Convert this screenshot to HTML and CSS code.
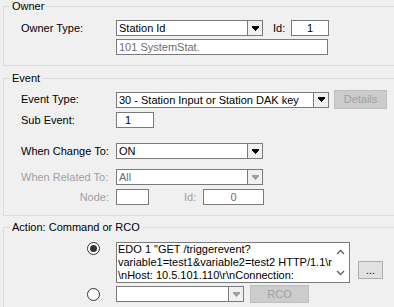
FILE: index.html
```html
<!DOCTYPE html>
<html>
<head>
<meta charset="utf-8">
<link rel="stylesheet" href="styles.css">
</head>
<body>
<div class="group owner">
  <span class="legend">Owner</span>
  <div class="row">
    <span class="lbl">Owner Type:</span>
    <div class="combo w147"><span class="val">Station Id</span><span class="cbtn"><svg width="7" height="5" viewBox="0 0 7 5"><path d="M0 0h7v1h-7zM0 1h7v1h-7zM1 2h5v1h-5zM2 3h3v1h-3zM3 4h1v1h-1z" fill="#000"/></svg></span></div>
    <span class="idlbl">Id:</span>
    <div class="box w38 center">1</div>
  </div>
  <div class="row r2">
    <span class="lbl"></span>
    <div class="box w212 dis">101 SystemStat.</div>
  </div>
</div>

<div class="group event">
  <span class="legend">Event</span>
  <div class="row h19">
    <span class="lbl">Event Type:</span>
    <div class="combo w213"><span class="val">30 - Station Input or Station DAK key</span><span class="cbtn"><svg width="7" height="5" viewBox="0 0 7 5"><path d="M0 0h7v1h-7zM0 1h7v1h-7zM1 2h5v1h-5zM2 3h3v1h-3zM3 4h1v1h-1z" fill="#000"/></svg></span></div>
    <button class="btn disabled details">Details</button>
  </div>
  <div class="row sub">
    <span class="lbl">Sub Event:</span>
    <div class="box w38 padl">1</div>
  </div>
  <div class="row change">
    <span class="lbl">When Change To:</span>
    <div class="combo w147"><span class="val">ON</span><span class="cbtn"><svg width="7" height="5" viewBox="0 0 7 5"><path d="M0 0h7v1h-7zM0 1h7v1h-7zM1 2h5v1h-5zM2 3h3v1h-3zM3 4h1v1h-1z" fill="#000"/></svg></span></div>
  </div>
  <div class="row related">
    <span class="lbl grey">When Related To:</span>
    <div class="combo w147"><span class="val dis">All</span><span class="cbtn"><svg width="7" height="5" viewBox="0 0 7 5"><path d="M0 0h7v1h-7zM0 1h7v1h-7zM1 2h5v1h-5zM2 3h3v1h-3zM3 4h1v1h-1z" fill="#a0a0a0"/></svg></span></div>
  </div>
  <div class="row node">
    <span class="lbl grey right">Node:</span>
    <div class="box w33"></div>
    <span class="idlbl grey idnode">Id:</span>
    <div class="box w61 center dis">0</div>
  </div>
</div>

<div class="group action">
  <span class="legend">Action: Command or RCO</span>
  <div class="row top arow">
    <span class="radcol"><span class="radio on"></span></span>
    <div class="memo">
      <div class="memo-text">EDO 1 "GET /triggerevent?<br>variable1=test1&amp;variable2=test2 HTTP/1.1\r<br>\nHost: 10.5.101.110\r\nConnection:</div>
      <div class="memo-scroll">
        <svg width="9" height="6" viewBox="0 0 9 6"><path d="M1 5L4.5 1.5L8 5" fill="none" stroke="#606060" stroke-width="1.4"/></svg>
        <svg width="9" height="6" viewBox="0 0 9 6"><path d="M1 1L4.5 4.5L8 1" fill="none" stroke="#606060" stroke-width="1.4"/></svg>
      </div>
    </div>
    <button class="btn dots">...</button>
  </div>
  <div class="row brow">
    <span class="radcol"><span class="radio"></span></span>
    <div class="combo w128"><span class="val"></span><span class="cbtn"><svg width="7" height="5" viewBox="0 0 7 5"><path d="M0 0h7v1h-7zM0 1h7v1h-7zM1 2h5v1h-5zM2 3h3v1h-3zM3 4h1v1h-1z" fill="#a0a0a0"/></svg></span></div>
    <button class="btn disabled rco">RCO</button>
  </div>
</div>
</body>
</html>
```

FILE: styles.css
```css
html, body {
  margin: 0;
  padding: 0;
  background: #f0f0f0;
  overflow: hidden;
  width: 394px;
  height: 307px;
}
body {
  font-family: "Liberation Sans", Arial, sans-serif;
  font-size: 11px;
  line-height: 13px;
  color: #000;
}
.group {
  position: relative;
  margin-left: 3px;
  width: 391px;
  border: 1px solid #dcdcdc;
  border-right: none;
  padding-left: 17px;
  box-sizing: border-box;
}
.legend {
  position: absolute;
  top: -7px;
  left: 6px;
  padding: 0 2px;
  background: #f0f0f0;
  line-height: 13px;
}
.owner { margin-top: 6px; padding-top: 13px; padding-bottom: 10px; }
.event { margin-top: 12px; padding-top: 11px; padding-bottom: 10px; }
.action { margin-top: 11px; padding-top: 14px; height: 80px; border-bottom: none; }

.row { display: flex; align-items: center; height: 16px; }
.row.h19 { height: 19px; }
.r2 { margin-top: 3px; }
.sub { margin-top: 3px; }
.change { margin-top: 15px; }
.related { margin-top: 10px; }
.node { margin-top: 4px; }
.row.top { align-items: flex-start; height: auto; }
.brow { height: 18px; margin-top: 2px; }

.lbl { width: 95px; flex: none; white-space: nowrap; }
.lbl.right { text-align: right; padding-right: 7px; box-sizing: border-box; }
.grey { color: #a0a0a0; }
.dis { color: #6d6d6d; }

.box, .combo {
  height: 16px;
  box-sizing: border-box;
  border: 1px solid #7a7a7a;
  background: #fff;
  flex: none;
  white-space: nowrap;
  overflow: hidden;
}
.box { padding: 0 2px; line-height: 14px; }
.box.center { text-align: center; }
.box.padl { padding-left: 8px; }
.combo { display: flex; }
.combo .val { flex: 1; padding: 0 2px; line-height: 14px; overflow: hidden; }
.cbtn {
  width: 15px;
  flex: none;
  box-sizing: border-box;
  border-left: 1px solid #7a7a7a;
  background: #f0f0f0;
  display: flex;
  align-items: center;
  justify-content: center;
}
.cbtn svg { display: block; }

.w33 { width: 33px; }
.w38 { width: 38px; }
.w61 { width: 61px; }
.w128 { width: 128px; }
.w147 { width: 147px; }
.w212 { width: 212px; }
.w213 { width: 213px; }

.idlbl { width: 18px; margin-left: 10px; flex: none; }
.idnode { margin-left: 35px; width: 19px; }

.btn {
  font-family: "Liberation Sans", Arial, sans-serif;
  font-size: 11px;
  line-height: 13px;
  padding: 0;
  margin: 0;
  box-sizing: border-box;
  flex: none;
  background: #e1e1e1;
  border: 1px solid #adadad;
  color: #000;
}
.btn.disabled {
  background: #cccccc;
  border-color: #bfbfbf;
  color: #a0a0a0;
}
.details { width: 53px; height: 19px; margin-left: 5px; }
.dots { width: 25px; height: 18px; margin-left: 8px; margin-top: 19px; line-height: 10px; }
.rco { width: 59px; height: 18px; margin-left: 6px; }

.radcol { width: 95px; flex: none; padding-left: 66px; box-sizing: border-box; display: flex; }
.radio {
  width: 13px;
  height: 13px;
  box-sizing: border-box;
  border: 1px solid #333;
  border-radius: 50%;
  background: #fff;
  display: flex;
  align-items: center;
  justify-content: center;
}
.radio.on::after {
  content: "";
  width: 7px;
  height: 7px;
  border-radius: 50%;
  background: #333;
}

.memo {
  width: 234px;
  height: 41px;
  box-sizing: border-box;
  border: 1px solid #7a7a7a;
  background: #fff;
  display: flex;
  flex: none;
}
.memo-text { flex: 1; padding: 0 2px 0 1px; white-space: nowrap; overflow: hidden; }
.memo-scroll {
  width: 17px;
  flex: none;
  display: flex;
  flex-direction: column;
  align-items: center;
  justify-content: space-between;
  padding: 6px 0 6px;
  box-sizing: border-box;
}
.memo-scroll svg { display: block; }
```
